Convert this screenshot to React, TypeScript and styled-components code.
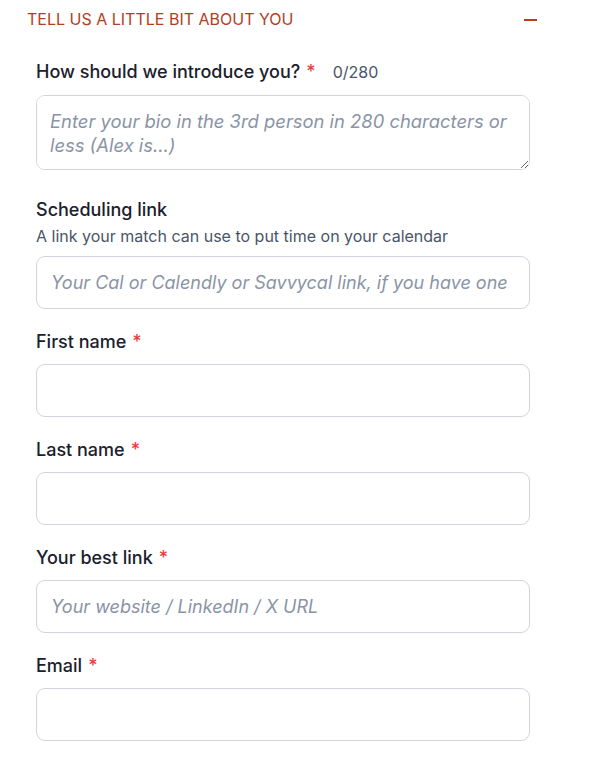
import React from "react";
import styled, { createGlobalStyle } from "styled-components";

const Global = createGlobalStyle`
  html, body { margin: 0; padding: 0; background: #ffffff; }
  body { font-family: Inter, "Noto Sans", sans-serif; -webkit-font-smoothing: antialiased; }
  * { box-sizing: border-box; }
`;

const Page = styled.div`
  width: 600px;
  display: flex;
  flex-direction: column;
`;

const SectionHeader = styled.div`
  display: flex;
  align-items: center;
  justify-content: space-between;
  padding: 7px 63px 0 27px;
  height: 31px;
`;

const SectionTitle = styled.h2`
  margin: 0;
  font-size: 16px;
  line-height: 24px;
  font-weight: 400;
  color: #b3401c;
  text-transform: uppercase;
`;

const Minus = styled.span`
  display: block;
  width: 13px;
  height: 2px;
  background: #b3401c;
  margin-top: 2px;
`;

const Form = styled.form`
  display: flex;
  flex-direction: column;
  gap: 21px;
  padding: 29px 0 0 36px;
  width: 530px;
`;

const Field = styled.div<{ $extra?: number }>`
  display: flex;
  flex-direction: column;
  margin-bottom: ${(p) => p.$extra ?? 0}px;
`;

const LabelRow = styled.div<{ $gap?: number }>`
  display: flex;
  align-items: baseline;
  gap: 17px;
  margin-bottom: ${(p) => p.$gap ?? 10}px;
`;

const Label = styled.label`
  font-size: 18px;
  line-height: 24px;
  font-weight: 500;
  color: #1a202c;
`;

const Req = styled.span`
  color: #e53e3e;
  margin-left: 6px;
`;

const Counter = styled.span`
  font-size: 16px;
  color: #4a5568;
`;

const Help = styled.p`
  margin: -7px 0 9px;
  font-size: 16px;
  line-height: 22px;
  color: #4a5568;
`;

const inputBase = `
  width: 494px;
  border: 1px solid #d3d5dc;
  border-radius: 9px;
  background: #fff;
  font-family: Inter, "Noto Sans", sans-serif;
  color: #1a202c;
  outline: none;
  &::placeholder {
    color: #8a94a6;
    font-style: italic;
  }
`;

const TextInput = styled.input`
  ${inputBase}
  height: 53px;
  font-size: 18px;
  padding: 0 14px;
`;

const TextArea = styled.textarea`
  ${inputBase}
  height: 75px;
  font-size: 18.4px;
  padding: 13px 13px;
  line-height: 24px;
  resize: vertical;
  display: block;
`;

type F = { label: string; required?: boolean; placeholder?: string; help?: string };

const fields: F[] = [
  { label: "Scheduling link", help: "A link your match can use to put time on your calendar", placeholder: "Your Cal or Calendly or Savvycal link, if you have one" },
  { label: "First name", required: true },
  { label: "Last name", required: true },
  { label: "Your best link", required: true, placeholder: "Your website / LinkedIn / X URL" },
  { label: "Email", required: true },
];

export default function App() {
  return (
    <Page>
      <Global />
      <SectionHeader>
        <SectionTitle>Tell us a little bit about you</SectionTitle>
        <Minus />
      </SectionHeader>
      <Form>
        <Field $extra={7}>
          <LabelRow $gap={11}>
            <Label>
              How should we introduce you?<Req>*</Req>
            </Label>
            <Counter>0/280</Counter>
          </LabelRow>
          <TextArea placeholder="Enter your bio in the 3rd person in 280 characters or less (Alex is...)" />
        </Field>
        {fields.map((f) => (
          <Field key={f.label}>
            <LabelRow>
              <Label>
                {f.label}
                {f.required && <Req>*</Req>}
              </Label>
            </LabelRow>
            {f.help && <Help>{f.help}</Help>}
            <TextInput placeholder={f.placeholder} />
          </Field>
        ))}
      </Form>
    </Page>
  );
}
